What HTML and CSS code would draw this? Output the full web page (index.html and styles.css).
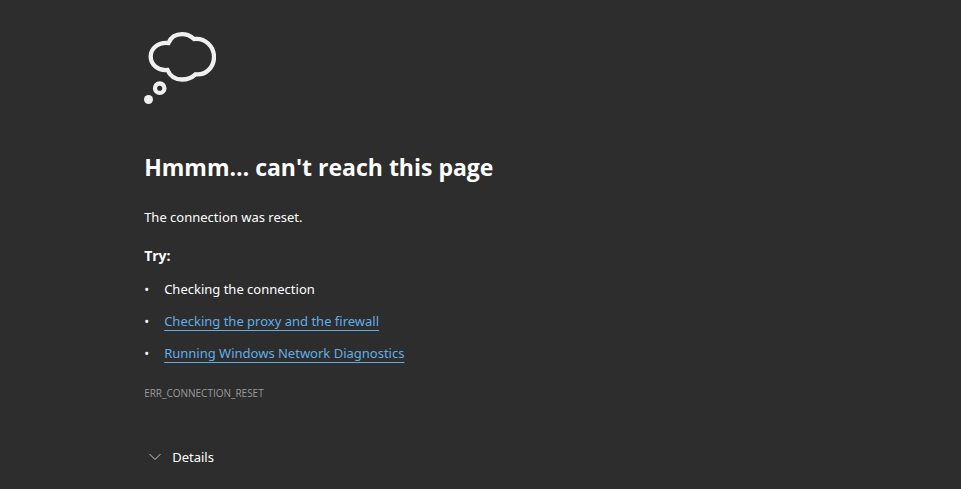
FILE: index.html
```html
<!DOCTYPE html>
<html lang="en">
<head>
<meta charset="utf-8">
<title>Can't reach this page</title>
<link rel="stylesheet" href="styles.css">
</head>
<body>
<main class="error-page">
  <svg class="cloud" viewBox="0 0 72 72" aria-hidden="true">
    <path d="M24.500 11C14 10 6.700 16.500 6.700 24.500C6.700 32.500 14 39 23.500 38C26 44 31 47.500 38 47.500C44 47.500 48 45.500 51.500 42.300C62 43.500 70 35 70 25C70 14.500 61 5.500 50 7C46.500 3.800 43 2.200 38 2.200C32 2.200 27 5 24.500 11Z" fill="none" stroke="#f0f0f0" stroke-width="4.300"/>
    <circle cx="15.700" cy="56.200" r="4.700" fill="none" stroke="#f0f0f0" stroke-width="4.300"/>
    <circle cx="4.500" cy="67.500" r="4.500" fill="#f0f0f0"/>
  </svg>
  <h1 class="title">Hmmm… can't reach this page</h1>
  <p class="summary">The connection was reset.</p>
  <h2 class="subtitle">Try:</h2>
  <ul class="suggestions">
    <li>Checking the connection</li>
    <li><a href="#proxy">Checking the proxy and the firewall</a></li>
    <li><a href="#diagnostics">Running Windows Network Diagnostics</a></li>
  </ul>
  <p class="code">ERR_CONNECTION_RESET</p>
  <button class="details" type="button">
    <svg class="chevron" viewBox="0 0 12 8" aria-hidden="true"><path d="M0.500 1L6 6.500L11.500 1" fill="none" stroke="#c8c8c8"/></svg>
    Details
  </button>
</main>
</body>
</html>
```

FILE: styles.css
```css
body {
  margin: 0;
  background: #2d2d2d;
  color: #fff;
  font: 13px/20px "Segoe UI", "Noto Sans", "Open Sans", sans-serif;
}
.error-page {
  padding: 32px 15% 20px;
}
.cloud {
  display: block;
  width: 72px;
  height: 72px;
}
.title {
  margin: 47px 0 0;
  font-family: "Segoe UI", "Open Sans", sans-serif;
  font-size: 23px;
  line-height: 32px;
  font-weight: 700;
}
.summary {
  margin: 24px 0 0;
}
.subtitle {
  margin: 19px 0 0;
  font-family: "Segoe UI", "Open Sans", sans-serif;
  font-size: 14px;
  line-height: 20px;
  font-weight: 700;
}
.suggestions {
  display: grid;
  gap: 12px;
  margin: 13px 0 0;
  padding: 0;
  list-style: none;
}
.suggestions li {
  display: flex;
}
.suggestions li::before {
  content: "•";
  width: 20px;
}
.suggestions a {
  color: #63ade5;
  text-decoration: underline 1px;
  text-decoration-skip-ink: none;
  text-underline-offset: 4px;
}
.code {
  margin: 22px 0 0;
  color: #999;
  font-family: "Segoe UI", "Open Sans", sans-serif;
  font-size: 10px;
  line-height: 16px;
}
.details {
  display: flex;
  align-items: center;
  gap: 11px;
  margin: 46px 0 0;
  padding: 0 5px;
  border: 0;
  background: none;
  color: inherit;
  font: inherit;
}
.chevron {
  width: 12px;
  height: 8px;
}
```
